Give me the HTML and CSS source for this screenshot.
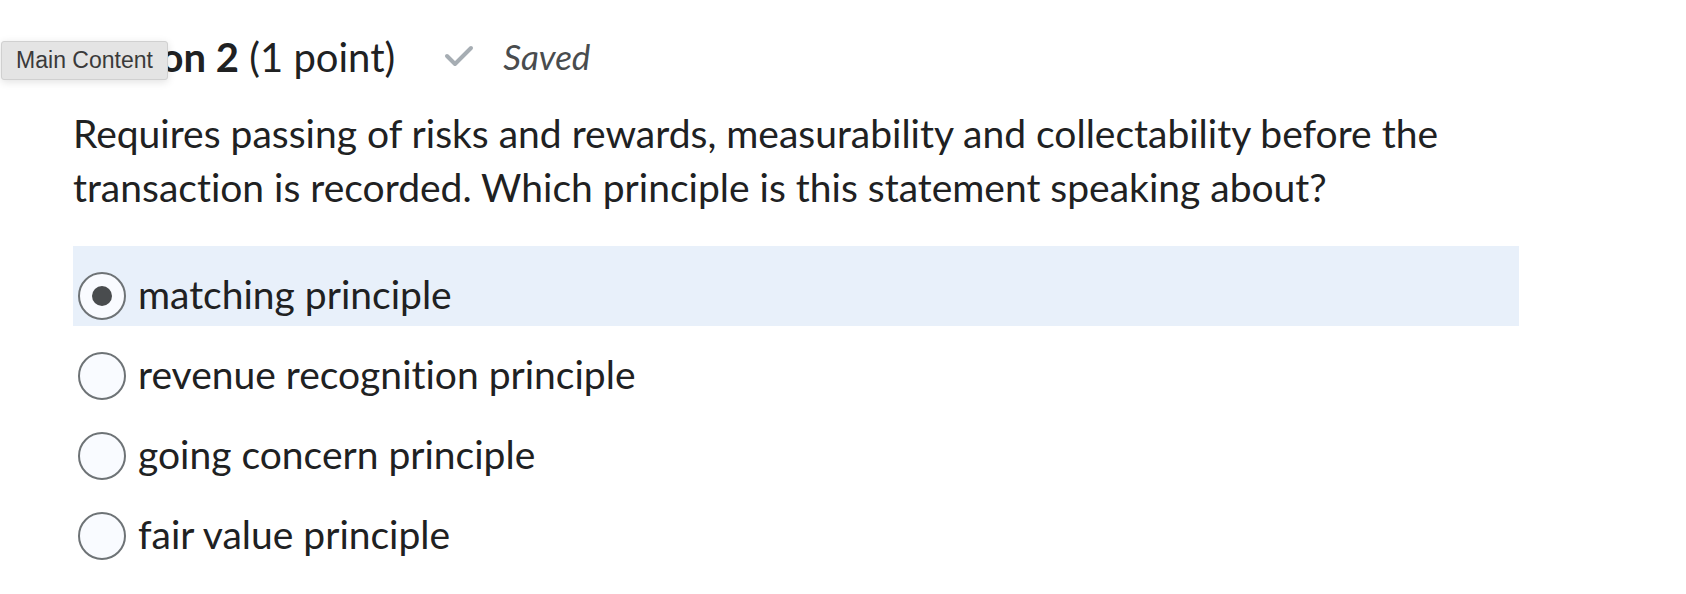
FILE: index.html
```html
<!DOCTYPE html>
<html>
<head>
<meta charset="utf-8">
<link rel="stylesheet" href="styles.css">
</head>
<body>
<div class="skip">Main Content</div>
<main class="page">
  <div class="qhead">
    <h2 class="qtitle"><strong>Question 2</strong> (1 point)</h2>
    <span class="saved">
      <svg class="check" viewBox="0 0 30 22" width="30" height="22"><path d="M3 11 L11 19 L27 3" fill="none" stroke="#a6adb3" stroke-width="4" stroke-linecap="round" stroke-linejoin="round"/></svg>
      <em>Saved</em>
    </span>
  </div>
  <p class="qtext">Requires passing of risks and rewards, measurability and collectability before the transaction is recorded. Which principle is this statement speaking about?</p>
  <ul class="options">
    <li class="opt selected"><span class="radio checked"></span><span class="label">matching principle</span></li>
    <li class="opt"><span class="radio"></span><span class="label">revenue recognition principle</span></li>
    <li class="opt"><span class="radio"></span><span class="label">going concern principle</span></li>
    <li class="opt"><span class="radio"></span><span class="label">fair value principle</span></li>
  </ul>
</main>
</body>
</html>
```
FILE: styles.css
```css
html, body {
  margin: 0;
  padding: 0;
  background: #ffffff;
}
body {
  font-family: Lato, "Open Sans", sans-serif;
  font-variant-ligatures: none;
  font-feature-settings: "liga" 0;
  color: #202122;
  width: 1686px;
  height: 594px;
  overflow: hidden;
  position: relative;
}
.skip {
  position: absolute;
  left: 1px;
  top: 41px;
  width: 167px;
  height: 39px;
  box-sizing: border-box;
  background: #e4e4e4;
  border: 1px solid #d0d0d0;
  border-radius: 3px;
  box-shadow: 0 2px 8px rgba(0,0,0,0.12);
  font-family: "Liberation Sans", Arial, sans-serif;
  font-size: 23px;
  color: #3a3a3a;
  display: flex;
  align-items: center;
  justify-content: center;
  z-index: 2;
}
.page {
  padding: 0 0 0 73px;
}
.qhead {
  display: flex;
  align-items: center;
  padding-top: 33px;
}
.qtitle {
  margin: 0 0 0 -31px;
  font-size: 40px;
  font-weight: 400;
  line-height: 48px;
  color: #202122;
}
.qtitle strong {
  font-weight: 700;
}
.saved {
  display: flex;
  align-items: center;
  margin-left: 49px;
  margin-top: -3px;
  gap: 29px;
  color: #494c4e;
}
.saved em {
  font-size: 35px;
  font-style: italic;
}
.qtext {
  margin: 25px 0 0 0;
  font-size: 39px;
  line-height: 54px;
  width: 1400px;
}
.options {
  list-style: none;
  margin: 32px 0 0 0;
  padding: 0;
  width: 1446px;
}
.opt {
  display: flex;
  align-items: center;
  height: 80px;
  font-size: 39px;
}
.opt.selected {
  background: #e8f0fa;
}
.radio {
  width: 48px;
  height: 48px;
  box-sizing: border-box;
  border: 2px solid #6e7376;
  border-radius: 50%;
  background: #f9fbff;
  margin-left: 5px;
  margin-right: 12px;
  position: relative;
  top: 10px;
  flex: none;
}
.radio.checked::after {
  content: "";
  position: absolute;
  left: 12px;
  top: 12px;
  width: 20px;
  height: 20px;
  border-radius: 50%;
  background: #494c4e;
}
.label {
  position: relative;
  top: 8px;
}
```
